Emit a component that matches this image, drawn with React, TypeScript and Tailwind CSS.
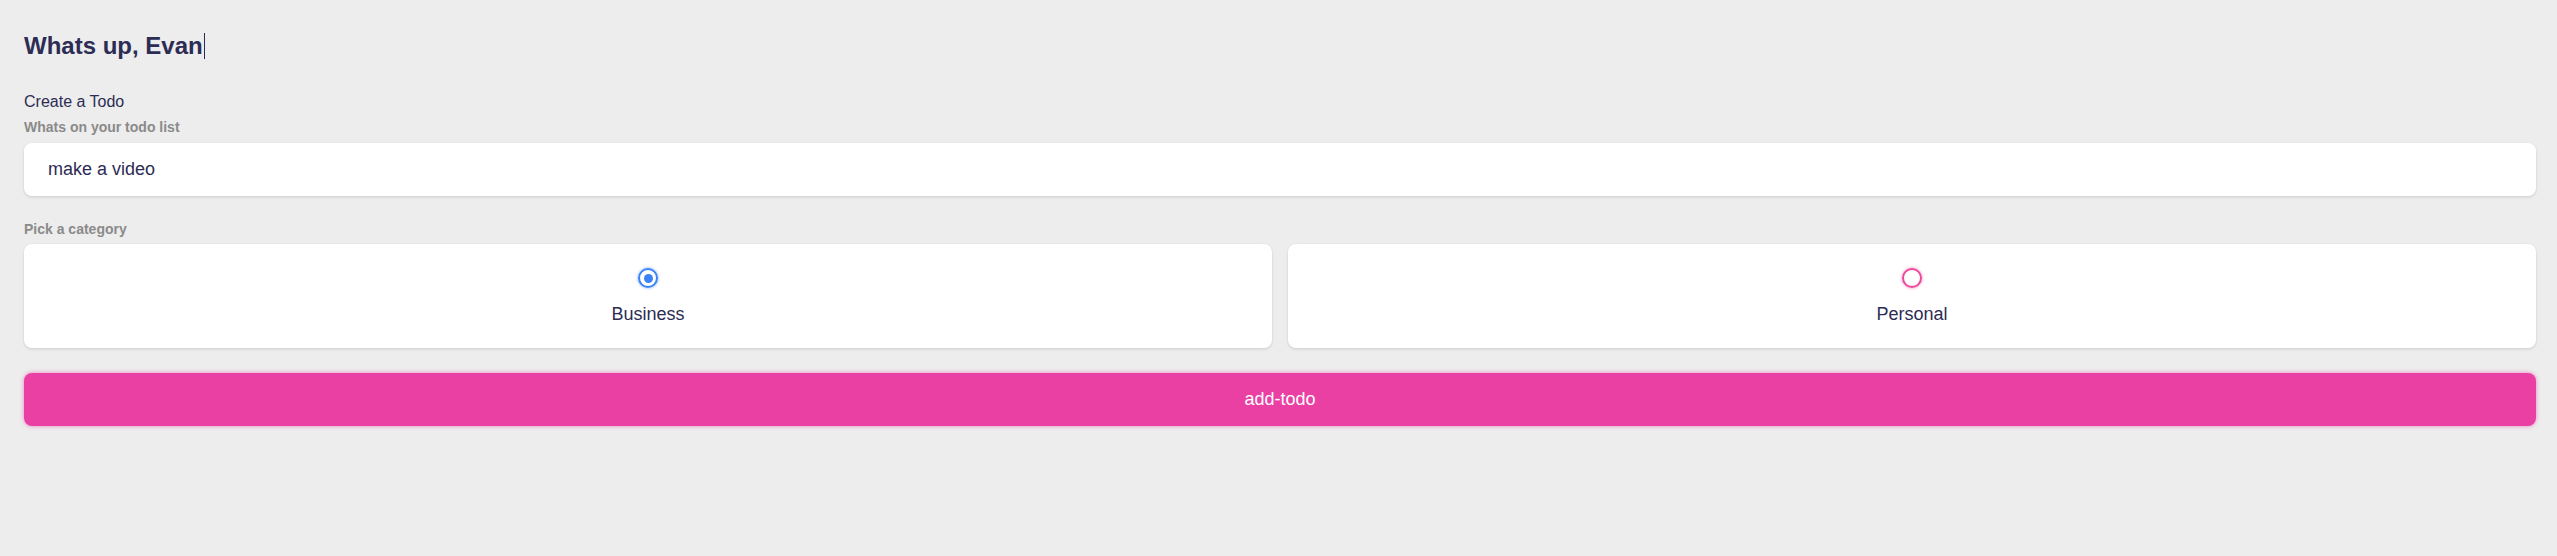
import React from "react";

export default function App() {
  return (
    <div
      className="min-h-[556px] w-full bg-[#ededed] pl-6 pr-[21px] pt-[33px] text-[#2c2c54]"
      style={{ fontFamily: '"Liberation Sans", Arial, sans-serif' }}
    >
      <h1 className="flex items-center text-[24px] font-bold leading-[26px]">
        <span>Whats up, Evan</span>
        <span className="ml-[1px] inline-block h-[26px] w-[1px] bg-[#2c2c54]" />
      </h1>

      <div className="mt-[31px] text-[16px] leading-[24px]">Create a Todo</div>
      <div className="mt-[3px] text-[14px] font-bold leading-[20px] text-[#8a8a8a]">
        Whats on your todo list
      </div>
      <div className="mt-[6px] flex h-[53px] items-center rounded-lg bg-white pl-6 text-[18px] shadow-[0_1px_3px_rgba(0,0,0,0.14)]">
        make a video
      </div>

      <div className="mt-[23px] text-[14px] font-bold leading-[20px] text-[#8a8a8a]">
        Pick a category
      </div>
      <div className="mt-[5px] grid grid-cols-2 gap-4">
        <div className="flex h-[104px] flex-col items-center rounded-lg bg-white pt-[24px] shadow-[0_1px_3px_rgba(0,0,0,0.14)]">
          <div className="flex h-[20px] w-[20px] items-center justify-center rounded-full border-[2.5px] border-[#3b82f6] shadow-[0_0_3px_rgba(59,130,246,0.7)]">
            <div className="h-[9px] w-[9px] rounded-full bg-[#3b82f6]" />
          </div>
          <div className="mt-[12px] text-[18px] leading-[28px]">Business</div>
        </div>
        <div className="flex h-[104px] flex-col items-center rounded-lg bg-white pt-[24px] shadow-[0_1px_3px_rgba(0,0,0,0.14)]">
          <div className="h-[20px] w-[20px] rounded-full border-2 border-[#ec4899] shadow-[0_0_3px_rgba(236,72,153,0.7)]" />
          <div className="mt-[12px] text-[18px] leading-[28px]">Personal</div>
        </div>
      </div>

      <button className="mt-[25px] flex h-[53px] w-full items-center justify-center rounded-lg bg-[#ea40a4] text-[18px] text-white shadow-[0_0_4px_rgba(234,64,164,0.6)]">
        add-todo
      </button>
    </div>
  );
}
